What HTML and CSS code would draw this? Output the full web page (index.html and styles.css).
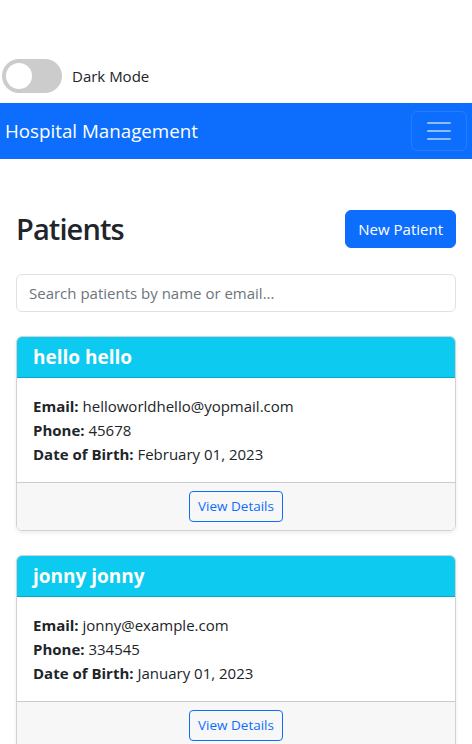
FILE: index.html
```html
<!DOCTYPE html>
<html lang="en">
<head>
<meta charset="utf-8">
<title>Hospital Management</title>
<link rel="stylesheet" href="styles.css">
</head>
<body>
  <div class="theme-bar">
    <label class="switch">
      <input type="checkbox">
      <span class="slider"></span>
    </label>
    <span class="theme-label">Dark Mode</span>
  </div>

  <nav class="navbar">
    <span class="brand">Hospital Management</span>
    <button class="toggler" type="button" aria-label="Toggle navigation">
      <svg width="30" height="30" viewBox="0 0 30 30"><path stroke="rgba(255,255,255,0.55)" stroke-linecap="round" stroke-miterlimit="10" stroke-width="2" d="M4 7h22M4 15h22M4 23h22"/></svg>
    </button>
  </nav>

  <main class="container">
    <div class="page-head">
      <h2 class="title">Patients</h2>
      <button class="btn btn-primary" type="button">New Patient</button>
    </div>

    <input class="search" type="text" placeholder="Search patients by name or email...">

    <div class="card">
      <div class="card-header"><h5 class="card-title">hello hello</h5></div>
      <div class="card-body">
        <p><strong>Email:</strong> helloworldhello@yopmail.com</p>
        <p><strong>Phone:</strong> 45678</p>
        <p><strong>Date of Birth:</strong> February 01, 2023</p>
      </div>
      <div class="card-footer"><button class="btn btn-outline" type="button">View Details</button></div>
    </div>

    <div class="card">
      <div class="card-header"><h5 class="card-title">jonny jonny</h5></div>
      <div class="card-body">
        <p><strong>Email:</strong> jonny@example.com</p>
        <p><strong>Phone:</strong> 334545</p>
        <p><strong>Date of Birth:</strong> January 01, 2023</p>
      </div>
      <div class="card-footer"><button class="btn btn-outline" type="button">View Details</button></div>
    </div>
  </main>
</body>
</html>
```

FILE: styles.css
```css
* { box-sizing: border-box; }

html, body {
  margin: 0;
  padding: 0;
}

body {
  font-family: "Open Sans", "Noto Sans", "Liberation Sans", sans-serif;
  font-size: 15px;
  line-height: 24px;
  color: #212529;
  background: #fff;
}

.theme-bar {
  display: flex;
  align-items: center;
  gap: 10px;
  padding: 59px 0 10px 2px;
}

.switch {
  position: relative;
  display: inline-block;
  width: 60px;
  height: 34px;
}

.switch input {
  opacity: 0;
  width: 0;
  height: 0;
}

.slider {
  position: absolute;
  inset: 0;
  background: #ccc;
  border-radius: 34px;
}

.slider::before {
  content: "";
  position: absolute;
  left: 4px;
  top: 4px;
  width: 26px;
  height: 26px;
  border-radius: 50%;
  background: #fff;
}

.theme-label {
  font-size: 15px;
}

.navbar {
  display: flex;
  align-items: center;
  justify-content: space-between;
  height: 56px;
  padding: 0 5px;
  background: #0d6efd;
}

.brand {
  color: #fff;
  font-size: 18.75px;
  line-height: 30px;
}

.toggler {
  display: flex;
  align-items: center;
  justify-content: center;
  width: 56px;
  height: 40px;
  padding: 4px 12px;
  background: transparent;
  border: 1px solid rgba(255,255,255,0.1);
  border-radius: 6px;
}

.toggler svg { display: block; }

.container {
  padding: 51px 16px 0 16px;
}

.page-head {
  display: flex;
  align-items: center;
  justify-content: space-between;
  margin-bottom: 26px;
}

.title {
  margin: 0;
  font-size: 29px;
  font-weight: 600;
  letter-spacing: -0.9px;
  line-height: 38px;
}

.btn {
  font-family: inherit;
  cursor: pointer;
  border-radius: 6px;
}

.btn-primary {
  background: #0d6efd;
  color: #fff;
  border: 1px solid #0d6efd;
  font-size: 15px;
  line-height: 24px;
  padding: 6px 12px;
}

.search {
  display: block;
  width: 100%;
  height: 38px;
  padding: 6px 12px;
  font-family: inherit;
  font-size: 15px;
  color: #212529;
  border: 1px solid #dee2e6;
  border-radius: 6px;
  margin-bottom: 24px;
}

.search::placeholder {
  color: #6c757d;
}

.card {
  border: 1px solid rgba(0,0,0,0.175);
  border-radius: 6px;
  box-shadow: 0 2px 4px rgba(0,0,0,0.075);
  overflow: hidden;
  margin-bottom: 24px;
}

.card-header {
  background: #0dcaf0;
  padding: 8px 16px;
  border-bottom: 1px solid rgba(0,0,0,0.175);
}

.card-title {
  margin: 0;
  color: #fff;
  font-size: 19px;
  font-weight: 700;
  line-height: 24px;
}

.card-body {
  padding: 16px;
}

.card-body p {
  margin: 0;
}

.card-body strong {
  font-weight: 700;
}

.card-footer {
  display: flex;
  justify-content: center;
  padding: 8px 16px;
  background: #f7f7f7;
  border-top: 1px solid rgba(0,0,0,0.175);
}

.btn-outline {
  background: transparent;
  color: #0d6efd;
  border: 1px solid #0d6efd;
  font-size: 13.5px;
  line-height: 21px;
  padding: 4px 8px;
  border-radius: 4px;
}
```
